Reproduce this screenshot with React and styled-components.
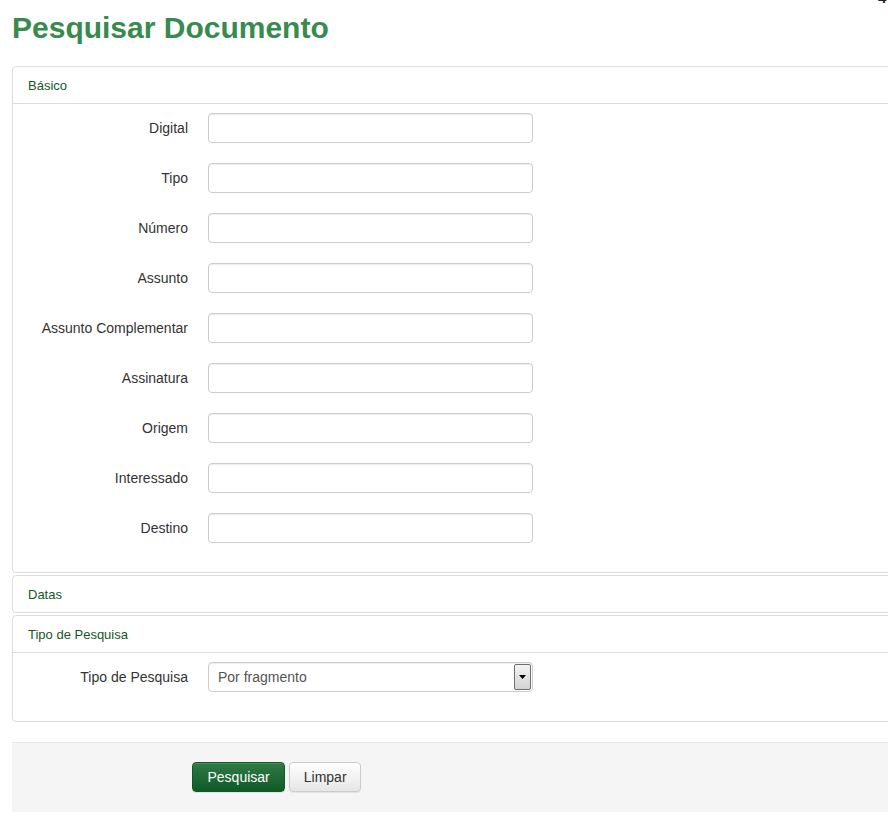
import React from "react";
import styled, { createGlobalStyle } from "styled-components";

const Global = createGlobalStyle`
  html, body { margin: 0; padding: 0; overflow: hidden; background: #fff; }
  body { font-family: "Liberation Sans", Arial, sans-serif; font-size: 14px; color: #333; }
  * { box-sizing: border-box; }
`;

const Page = styled.div`
  position: relative;
  width: 1000px;
  padding: 11px 0 0 12px;
`;

const CornerMark = styled.span`
  position: absolute;
  left: 878px;
  top: -11px;
  font: bold 15px "Liberation Sans", Arial, sans-serif;
  color: #222;
`;

const Title = styled.h1`
  margin: 0 0 22px;
  font-size: 30px;
  line-height: 33px;
  font-weight: bold;
  color: #388a4f;
`;

const Panel = styled.section`
  border: 1px solid #ddd;
  border-radius: 4px;
  background: #fff;
  & + & { margin-top: 2px; }
`;

const PanelHeader = styled.div`
  padding: 11px 15px 9px;
  font-size: 13px;
  line-height: 16px;
  color: #14571f;
  border-bottom: ${(p) => (p.$open ? "1px solid #ddd" : "none")};
`;

const PanelBody = styled.div`
  padding: 9px 15px 9px;
`;

const FormRow = styled.div`
  display: grid;
  grid-template-columns: 160px 325px;
  column-gap: 20px;
  align-items: center;
  margin-bottom: 20px;
`;

const Label = styled.label`
  text-align: right;
  font-size: 14px;
  color: #333;
`;

const Input = styled.input`
  display: block;
  width: 325px;
  height: 30px;
  padding: 4px 9px;
  border: 1px solid #ccc;
  border-radius: 4px;
  box-shadow: inset 0 1px 1px rgba(0, 0, 0, 0.075);
  font: 14px "Liberation Sans", Arial, sans-serif;
  color: #555;
  outline: none;
`;

const FakeSelect = styled.div`
  display: flex;
  align-items: stretch;
  justify-content: space-between;
  width: 325px;
  height: 30px;
  padding: 1px 1px 1px 9px;
  border: 1px solid #ccc;
  border-radius: 4px;
  box-shadow: inset 0 1px 1px rgba(0, 0, 0, 0.075);
  font-size: 14px;
  color: #555;
`;

const SelectText = styled.span`
  align-self: center;
`;

const DropButton = styled.span`
  display: flex;
  align-items: center;
  justify-content: center;
  width: 17px;
  border: 1px solid #6f6f6f;
  border-radius: 2px;
  background: linear-gradient(#f4f4f4, #d2d2d2);
`;

const Footer = styled.div`
  margin-top: 20px;
  padding: 19px 0 20px 180px;
  background: #f5f5f5;
  border-top: 1px solid #e5e5e5;
  display: flex;
  gap: 4px;
`;

const Button = styled.button`
  height: 30px;
  padding: 0 ${(p) => (p.$primary ? "14.5px" : "13.5px")};
  border-radius: 4px;
  font: 14px "Liberation Sans", Arial, sans-serif;
  cursor: pointer;
  border: 1px solid ${(p) => (p.$primary ? "#13562a" : "#ccc")};
  color: ${(p) => (p.$primary ? "#fff" : "#333")};
  background: ${(p) =>
    p.$primary
      ? "linear-gradient(#2f7a45, #0f5a27)"
      : "linear-gradient(#fff, #e6e6e6)"};
  box-shadow: inset 0 1px 0 rgba(255, 255, 255, 0.15), 0 1px 1px rgba(0, 0, 0, 0.075);
`;

const fields = [
  "Digital",
  "Tipo",
  "Número",
  "Assunto",
  "Assunto Complementar",
  "Assinatura",
  "Origem",
  "Interessado",
  "Destino",
];

export default function App() {
  return (
    <>
      <Global />
      <Page>
        <CornerMark>4</CornerMark>
        <Title>Pesquisar Documento</Title>

        <Panel>
          <PanelHeader $open>Básico</PanelHeader>
          <PanelBody>
            {fields.map((f) => (
              <FormRow key={f}>
                <Label>{f}</Label>
                <Input type="text" />
              </FormRow>
            ))}
          </PanelBody>
        </Panel>

        <Panel>
          <PanelHeader>Datas</PanelHeader>
        </Panel>

        <Panel>
          <PanelHeader $open>Tipo de Pesquisa</PanelHeader>
          <PanelBody>
            <FormRow>
              <Label>Tipo de Pesquisa</Label>
              <FakeSelect>
                <SelectText>Por fragmento</SelectText>
                <DropButton>
                  <svg width="7" height="4" viewBox="0 0 7 4">
                    <path d="M0 0H7L3.5 4Z" fill="#000" />
                  </svg>
                </DropButton>
              </FakeSelect>
            </FormRow>
          </PanelBody>
        </Panel>

        <Footer>
          <Button $primary>Pesquisar</Button>
          <Button>Limpar</Button>
        </Footer>
      </Page>
    </>
  );
}
